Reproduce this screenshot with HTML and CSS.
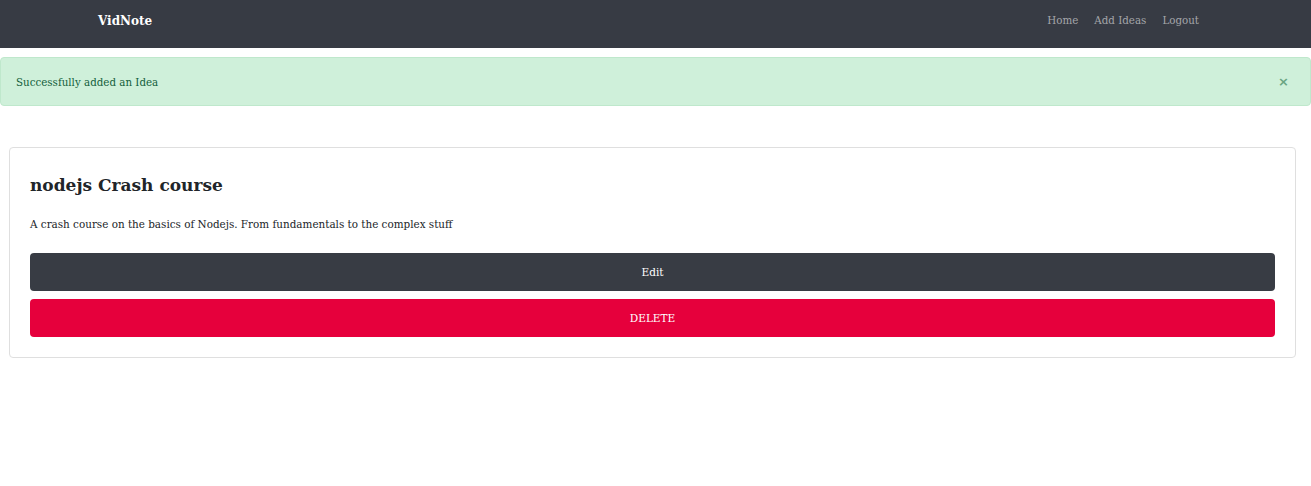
FILE: index.html
```
<!DOCTYPE html>
<html lang="en">
<head>
<meta charset="utf-8">
<title>VidNote</title>
<link rel="stylesheet" href="styles.css">
</head>
<body>
<nav class="navbar">
  <a class="brand" href="#">VidNote</a>
  <ul class="nav-links">
    <li><a href="#">Home</a></li>
    <li><a href="#">Add Ideas</a></li>
    <li><a href="#">Logout</a></li>
  </ul>
</nav>
<div class="alert">
  <span>Successfully added an Idea</span>
  <button class="close" type="button">&times;</button>
</div>
<main class="content">
  <div class="card">
    <h2 class="card-title">nodejs Crash course</h2>
    <p class="card-text">A crash course on the basics of Nodejs. From fundamentals to the complex stuff</p>
    <a class="btn btn-dark" href="#">Edit</a>
    <form class="delete-form">
      <button class="btn btn-red" type="button">DELETE</button>
    </form>
  </div>
</main>
</body>
</html>
```
FILE: styles.css
```
* { box-sizing: border-box; }
html, body { margin: 0; padding: 0; background: #fff; }
body {
  font-family: "DejaVu Serif", "Liberation Serif", serif;
  color: #212529;
}
.navbar {
  height: 48px;
  background: #373b44;
  display: flex;
  align-items: center;
  justify-content: space-between;
  padding: 0 104px 0 98px;
}
.brand {
  color: #fff;
  font-weight: bold;
  font-size: 12px;
  text-decoration: none;
  margin-top: -7px;
}
.nav-links {
  list-style: none;
  margin: 0;
  padding: 0;
  display: flex;
  margin-top: -8px;
}
.nav-links a {
  display: block;
  padding: 0 8px;
  color: #a4a6aa;
  font-size: 10.3px;
  text-decoration: none;
}
.alert {
  margin-top: 9px;
  height: 49px;
  background: #cff0da;
  border: 1px solid #bfe8cc;
  border-radius: 4px;
  color: #135e3a;
  font-size: 10.3px;
  display: flex;
  align-items: center;
  justify-content: space-between;
  padding: 0 21px 0 15px;
}
.close {
  background: none;
  border: none;
  padding: 0;
  color: #6aa582;
  font-size: 13px;
  font-weight: bold;
  font-family: "DejaVu Sans", sans-serif;
  line-height: 1;
  cursor: pointer;
}
.content {
  padding: 41px 15px 0 9px;
}
.card {
  border: 1px solid #dfdfdf;
  border-radius: 4px;
  padding: 20px 20px 20px 20px;
}
.card-title {
  margin: 5px 0 0;
  font-size: 17px;
  font-weight: bold;
  line-height: 24px;
  color: #212529;
}
.card-text {
  margin: 19px 0 21px;
  font-size: 10.4px;
  line-height: 16px;
}
.btn {
  display: flex;
  align-items: center;
  justify-content: center;
  width: 100%;
  height: 38px;
  border: none;
  border-radius: 4px;
  color: #fff;
  font-family: inherit;
  font-size: 10.5px;
  text-decoration: none;
}
.btn-dark { background: #383c44; }
.btn-red { background: #e6003c; margin-top: 8px; }
.delete-form { margin: 0; }
```
